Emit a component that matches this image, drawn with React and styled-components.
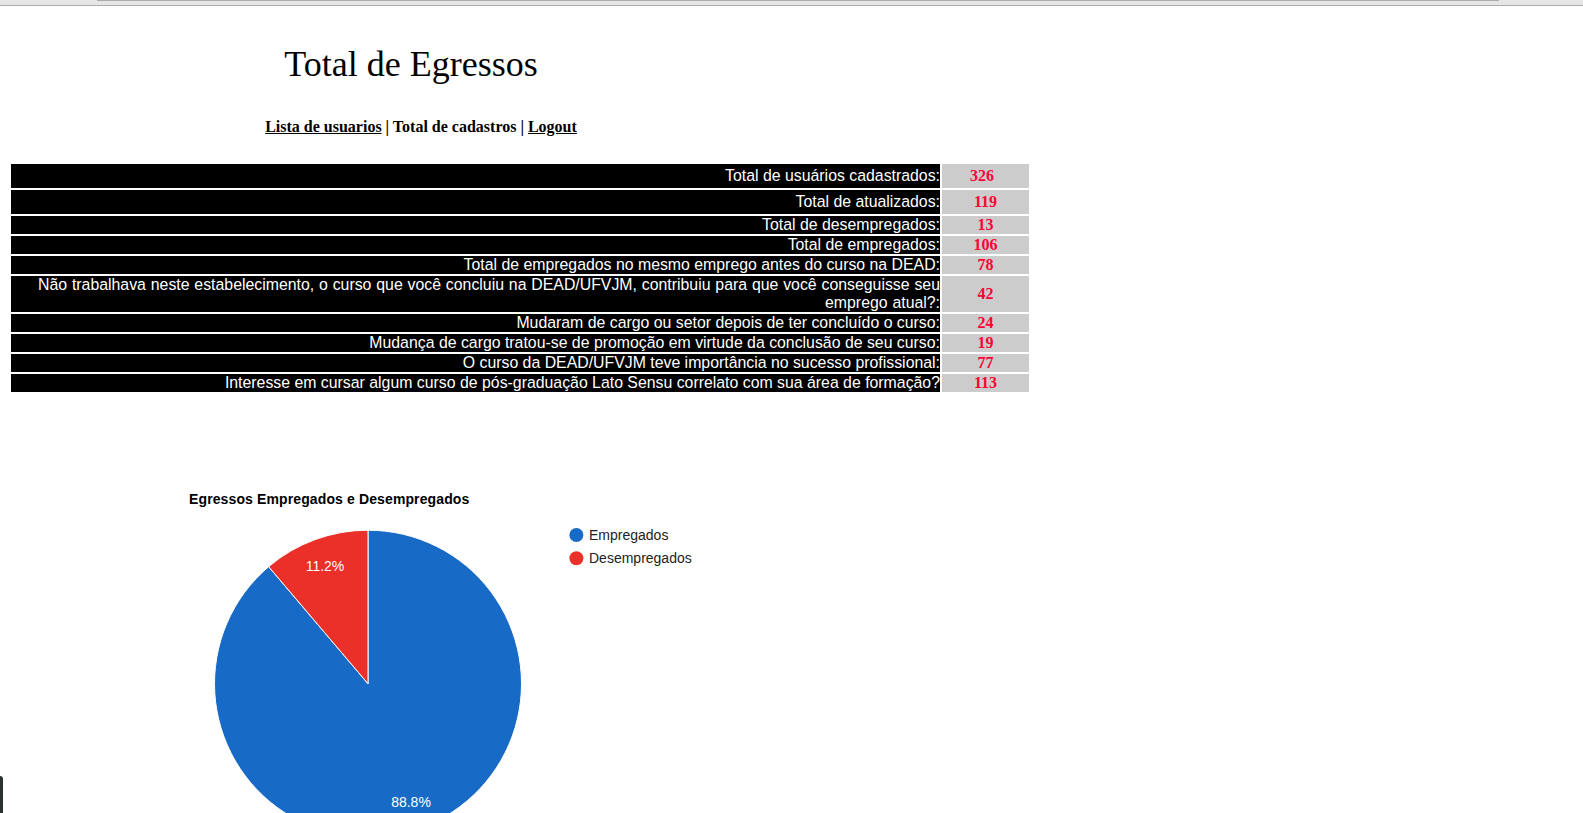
import React from 'react';
import styled, { createGlobalStyle } from 'styled-components';

const GlobalStyle = createGlobalStyle`
  html,
  body {
    margin: 0;
    padding: 0;
    overflow: hidden;
    background: #fff;
  }
`;

const TopBar = styled.div`
  height: 5px;
  background: #e6e6e6;
  border-bottom: 1px solid #acacac;
`;

const Thumb = styled.div`
  margin-left: 97px;
  width: 1402px;
  height: 1px;
  background: #acacac;
`;

const Header = styled.div`
  width: 822px;
  text-align: center;
  font-family: 'Liberation Serif', 'Times New Roman', serif;
  color: #000;
`;

const Title = styled.h1`
  margin: 38px 0 0;
  font-size: 36px;
  line-height: 40px;
  font-weight: 400;
`;

const Nav = styled.div`
  margin-top: 33px;
  padding-left: 20px;
  font-size: 16px;
  line-height: 20px;
  font-weight: 700;

  a {
    color: #000;
    text-decoration: underline;
  }
`;

const StatsTable = styled.table`
  margin: 25px 0 0 9px;
  width: 1022px;
  table-layout: fixed;
  border-collapse: separate;
  border-spacing: 2px;
`;

const Row = styled.tr`
  height: ${(props) => props.$h}px;
`;

const Label = styled.td`
  padding: 0;
  background: #000;
  color: #fff;
  text-align: right;
  vertical-align: middle;
  font-family: 'Liberation Sans', Arial, sans-serif;
  font-size: 15.85px;
  line-height: 18px;
  word-spacing: ${(props) => props.$ws || 0}px;
`;

const Value = styled.td`
  padding: 0 ${(props) => props.$pad || 0}px 0 0;
  background: #cccccc;
  color: #ff0033;
  text-align: center;
  vertical-align: middle;
  font-family: 'Liberation Serif', 'Times New Roman', serif;
  font-size: 16px;
  font-weight: 700;
  line-height: 18px;
`;

const ChartSection = styled.div`
  margin-top: 57px;
`;

const Chart = styled.svg`
  display: block;
  font-family: 'Liberation Sans', Arial, sans-serif;
`;

const DockTab = styled.div`
  position: fixed;
  left: 0;
  bottom: 0;
  width: 3px;
  height: 37px;
  background: #2e3132;
  border-top-right-radius: 3px;
`;

const stats = [
  { label: 'Total de usuários cadastrados:', value: 326, h: 24, pad: 7 },
  { label: 'Total de atualizados:', value: 119, h: 24 },
  { label: 'Total de desempregados:', value: 13, h: 18 },
  { label: 'Total de empregados:', value: 106, h: 18 },
  { label: 'Total de empregados no mesmo emprego antes do curso na DEAD:', value: 78, h: 18 },
  {
    label:
      'Não trabalhava neste estabelecimento, o curso que você concluiu na DEAD/UFVJM, contribuiu para que você conseguisse seu emprego atual?:',
    value: 42,
    h: 36,
    ws: 0.45,
  },
  { label: 'Mudaram de cargo ou setor depois de ter concluído o curso:', value: 24, h: 18 },
  { label: 'Mudança de cargo tratou-se de promoção em virtude da conclusão de seu curso:', value: 19, h: 18 },
  { label: 'O curso da DEAD/UFVJM teve importância no sucesso profissional:', value: 77, h: 18 },
  {
    label: 'Interesse em cursar algum curso de pós-graduação Lato Sensu correlato com sua área de formação?',
    value: 113,
    h: 18,
  },
];

const BLUE = '#176bc7';
const RED = '#ea3029';

const PieChart = () => {
  const cx = 368;
  const cy = 232.7;
  const r = 153.5;
  const share = 0.112;
  const ang = share * 2 * Math.PI;
  const ex = cx - r * Math.sin(ang);
  const ey = cy - r * Math.cos(ang);

  return (
    <Chart width="900" height="400" viewBox="0 0 900 400">
      <text x="189" y="52.5" fontSize="14" fontWeight="700" letterSpacing="0.12" fill="#000">
        Egressos Empregados e Desempregados
      </text>
      <path
        d={`M${cx},${cy} L${ex},${ey} A${r},${r} 0 1 0 ${cx},${cy - r} Z`}
        fill={BLUE}
        stroke="#fff"
        strokeWidth="1"
      />
      <path
        d={`M${cx},${cy} L${cx},${cy - r} A${r},${r} 0 0 0 ${ex},${ey} Z`}
        fill={RED}
        stroke="#fff"
        strokeWidth="1"
      />
      <text x="325" y="120" fontSize="14" fill="#fff" textAnchor="middle">
        11.2%
      </text>
      <text x="411" y="356" fontSize="14" fill="#fff" textAnchor="middle">
        88.8%
      </text>
      <circle cx="576.4" cy="84" r="7" fill={BLUE} />
      <text x="589" y="89" fontSize="14" fill="#222">
        Empregados
      </text>
      <circle cx="576.4" cy="107.3" r="7" fill={RED} />
      <text x="589" y="112.3" fontSize="14" fill="#222">
        Desempregados
      </text>
    </Chart>
  );
};

const App = () => {
  return (
    <>
      <GlobalStyle />
      <TopBar>
        <Thumb />
      </TopBar>
      <Header>
        <Title>Total de Egressos</Title>
        <Nav>
          <a href="#usuarios">Lista de usuarios</a> | Total de cadastros |{' '}
          <a href="#logout">Logout</a>
        </Nav>
      </Header>
      <StatsTable>
        <colgroup>
          <col />
          <col style={{ width: 87 }} />
        </colgroup>
        <tbody>
          {stats.map((s) => (
            <Row key={s.label} $h={s.h}>
              <Label $ws={s.ws}>{s.label}</Label>
              <Value $pad={s.pad}>{s.value}</Value>
            </Row>
          ))}
        </tbody>
      </StatsTable>
      <ChartSection>
        <PieChart />
      </ChartSection>
      <DockTab />
    </>
  );
};

export default App;
